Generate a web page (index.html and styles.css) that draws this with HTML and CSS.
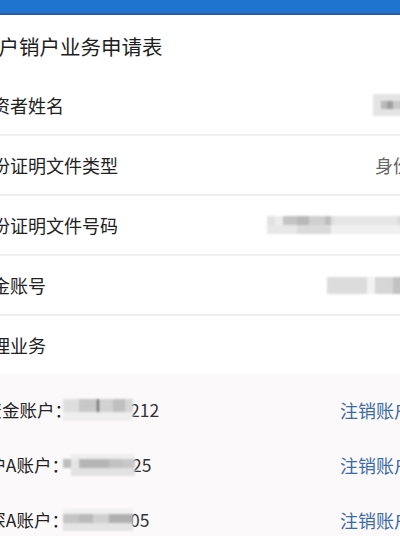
FILE: index.html
```html
<!DOCTYPE html>
<html lang="zh-CN">
<head>
<meta charset="utf-8">
<title>开户销户业务申请表</title>
<link rel="stylesheet" href="styles.css">
</head>
<body>
<div class="topbar"></div>
<main class="page">
  <h1 class="title">开户销户业务申请表</h1>
  <div class="row">
    <span class="label">投资者姓名</span>
    <span class="value"><span class="mosaic mz-name"></span></span>
  </div>
  <div class="row">
    <span class="label">身份证明文件类型</span>
    <span class="value text">身份证</span>
  </div>
  <div class="row">
    <span class="label">身份证明文件号码</span>
    <span class="value"><span class="mosaic mz-id"></span></span>
  </div>
  <div class="row">
    <span class="label">资金账号</span>
    <span class="value"><span class="mosaic mz-acct"></span></span>
  </div>
  <div class="row last">
    <span class="label">办理业务</span>
  </div>
  <section class="sublist">
    <div class="item">
      <span class="ilabel">资金账户：</span>
      <span class="acct"><span class="mosaic mz-sub1"></span><span class="digits">212</span></span>
      <a class="action">注销账户</a>
    </div>
    <div class="item">
      <span class="ilabel short">沪A账户：</span>
      <span class="acct"><span class="mosaic mz-sub2"></span><span class="digits">25</span></span>
      <a class="action">注销账户</a>
    </div>
    <div class="item">
      <span class="ilabel short">深A账户：</span>
      <span class="acct"><span class="mosaic mz-sub3"></span><span class="digits">05</span></span>
      <a class="action">注销账户</a>
    </div>
  </section>
</main>
</body>
</html>
```
FILE: styles.css
```css
html, body {
  margin: 0;
  padding: 0;
  background: #ffffff;
}
body {
  width: 400px;
  height: 536px;
  overflow: hidden;
  font-family: "Noto Sans CJK SC", "Noto Sans", sans-serif;
  color: #222;
}
.topbar {
  height: 13px;
  background: #1f74d0;
  border-bottom: 2px solid #2f5c9c;
}
.page {
  margin-left: -26px;
  width: 456px;
}
.title {
  margin: 0;
  height: 61px;
  display: flex;
  align-items: center;
  padding-left: 4px;
  font-size: 20.5px;
  font-weight: 400;
  color: #1e1e1e;
}
.row {
  height: 58px;
  display: flex;
  align-items: center;
  justify-content: space-between;
  border-bottom: 2px solid #efefef;
  font-size: 18px;
}
.row.last {
  border-bottom: none;
}
.label {
  white-space: nowrap;
}
.value {
  display: flex;
  align-items: center;
  padding-right: 1px;
}
.value.text {
  color: #666;
}
.mosaic {
  display: inline-block;
  filter: blur(1.3px);
}
.mz-name {
  width: 56px;
  height: 22px;
  background:
    linear-gradient(90deg, transparent 0 8px, #b9b9b9 8px 14px, #9e9e9e 14px 20px, #c9c9c9 20px 28px, #b0b0b0 28px 34px, transparent 34px) 0 7px / 100% 8px no-repeat,
    linear-gradient(90deg, #e4e4e4 0 30px, #d6d6d6 30px 56px);
}
.mz-id {
  width: 192px;
  height: 18px;
  margin-right: -30px;
  background:
    linear-gradient(90deg, #e2e2e2 0 8px, #ececec 8px 16px, #c4c4c4 16px 30px, #b8b8b8 30px 42px, #d0d0d0 42px 58px, #bdbdbd 58px 64px, #e0e0e0 64px 68px, #e6e6e6 68px 130px, #dcdcdc 130px 192px) 0 0 / 100% 9px no-repeat,
    linear-gradient(90deg, #e8e8e8 0 30px, #dadada 30px 64px, #f0f0f0 64px 192px) 0 9px / 100% 9px no-repeat;
}
.mz-acct {
  width: 102px;
  height: 17px;
  background:
    linear-gradient(90deg, #dcdcdc 0 40px, #f2f2f2 40px 48px, #d6d6d6 48px 66px, #c2c2c2 66px 102px);
}
.sublist {
  background: #fcf9fb;
  padding-top: 8px;
}
.item {
  height: 55px;
  display: flex;
  align-items: center;
  font-size: 17.5px;
  padding-right: 18px;
}
.ilabel {
  width: 98px;
  box-sizing: border-box;
  text-align: right;
  white-space: nowrap;
  color: #222;
}
.ilabel.short {
  padding-right: 3px;
}
.acct {
  display: flex;
  align-items: center;
  margin-left: -9px;
  color: #333;
}
.digits {
  margin-left: -3px;
}
.mz-sub1 {
  width: 70px;
  height: 22px;
  background:
    linear-gradient(90deg, #dedede 0 16px, #c8c8c8 16px 34px, #6a6a6a 34px 36px, #d2d2d2 36px 50px, #c0c0c0 50px 62px, #d6d6d6 62px 70px) 0 0 / 100% 13px no-repeat,
    linear-gradient(90deg, #eeeeee 0 70px) 0 13px / 100% 9px no-repeat;
}
.mz-sub2 {
  width: 72px;
  height: 22px;
  background:
    linear-gradient(90deg, transparent 0 8px, #eeeeee 8px 72px) 0 0 / 100% 5px no-repeat,
    linear-gradient(90deg, #bdbdbd 0 8px, #e6e6e6 8px 16px, #b5b5b5 16px 46px, #c2c2c2 46px 60px, #c8c8c8 60px 72px) 0 5px / 100% 9px no-repeat,
    linear-gradient(90deg, transparent 0 8px, #e2e2e2 8px 72px) 0 14px / 100% 8px no-repeat;
}
.mz-sub3 {
  width: 70px;
  height: 22px;
  background:
    linear-gradient(90deg, #f0f0f0 0 70px) 0 0 / 100% 5px no-repeat,
    linear-gradient(90deg, #c4c4c4 0 16px, #bababa 16px 30px, #d0d0d0 30px 46px, #b0b0b0 46px 70px) 0 5px / 100% 9px no-repeat,
    linear-gradient(90deg, #e4e4e4 0 70px) 0 14px / 100% 8px no-repeat;
}
.action {
  margin-left: auto;
  font-size: 18px;
  color: #3b6ca6;
  white-space: nowrap;
  cursor: pointer;
}
```
